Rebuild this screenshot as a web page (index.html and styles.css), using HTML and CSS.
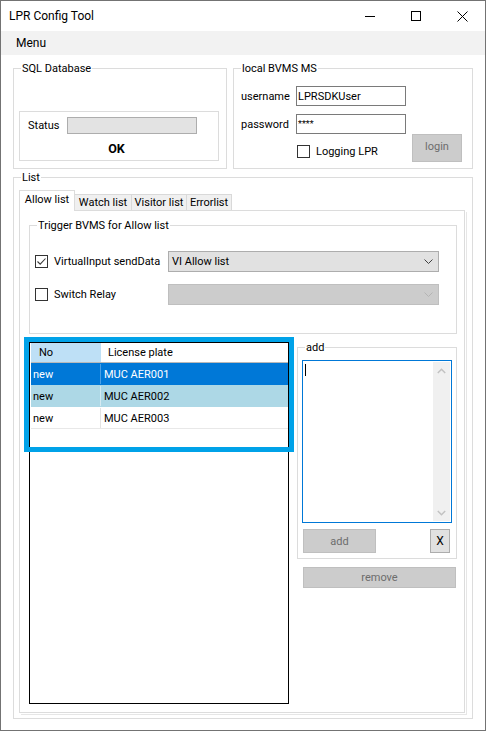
FILE: index.html
```html
<!DOCTYPE html>
<html lang="en">
<head>
    <meta charset="UTF-8">
    <meta name="viewport" content="width=device-width, initial-scale=1.0">
    <title>LPR Config Tool</title>
    <link rel="stylesheet" href="styles.css">
</head>
<body>
    <div class="window">
        <div class="titlebar">
            <span class="title">LPR Config Tool</span>
            <span class="caption-btn">
                <svg width="10" height="1" viewBox="0 0 10 1"><rect width="10" height="1" fill="#000"/></svg>
            </span>
            <span class="caption-btn">
                <svg width="10" height="10" viewBox="0 0 10 10"><rect x="0.5" y="0.5" width="9" height="9" fill="none" stroke="#000"/></svg>
            </span>
            <span class="caption-btn">
                <svg width="11" height="11" viewBox="0 0 11 11"><path d="M0.5 0.5L10.5 10.5M10.5 0.5L0.5 10.5" stroke="#000" stroke-width="1"/></svg>
            </span>
        </div>

        <div class="menubar"><span class="menu-item">Menu</span></div>

        <div class="content">
            <div class="top-row">
                <!-- SQL group -->
                <div class="group sql">
                    <span class="group-title">SQL Database</span>
                    <div class="status-box">
                        <div class="status-row">
                            <span class="status-label">Status</span>
                            <span class="status-field"></span>
                        </div>
                        <div class="status-ok">OK</div>
                    </div>
                </div>

                <!-- BVMS login group -->
                <div class="group bvms">
                    <span class="group-title">local BVMS MS</span>
                    <div class="login-form">
                        <span>username</span>
                        <span class="textbox">LPRSDKUser</span>
                        <span>password</span>
                        <span class="textbox password">****</span>
                    </div>
                    <div class="login-options">
                        <span class="check-item"><span class="checkbox"></span>Logging LPR</span>
                        <button class="btn btn-disabled login-btn">login</button>
                    </div>
                </div>
            </div>

            <div class="group list">
                <span class="group-title">List</span>
                <div class="tab-strip">
                    <span class="tab active">Allow list</span>
                    <span class="tab tab-watch">Watch list</span>
                    <span class="tab tab-visitor">Visitor list</span>
                    <span class="tab tab-error">Errorlist</span>
                </div>
                <div class="tab-page">
                    <div class="group trigger">
                        <span class="group-title">Trigger BVMS for Allow list</span>
                        <div class="trigger-row">
                            <span class="check-item trigger-check">
                                <span class="checkbox">
                                    <svg width="11" height="11" viewBox="0 0 11 11"><polyline points="1.5,5.5 4.2,8.2 9.5,2.5" fill="none" stroke="#3a3a3a" stroke-width="1.1"/></svg>
                                </span>VirtualInput sendData
                            </span>
                            <span class="combo">
                                <span>VI Allow list</span>
                                <svg width="9" height="5" viewBox="0 0 9 5"><polyline points="0.5,0.5 4.5,4.5 8.5,0.5" fill="none" stroke="#404040"/></svg>
                            </span>
                        </div>
                        <div class="trigger-row">
                            <span class="check-item trigger-check"><span class="checkbox"></span>Switch Relay</span>
                            <span class="combo combo-disabled">
                                <span></span>
                                <svg width="9" height="5" viewBox="0 0 9 5"><polyline points="0.5,0.5 4.5,4.5 8.5,0.5" fill="none" stroke="#b4b4b4"/></svg>
                            </span>
                        </div>
                    </div>

                    <div class="lower">
                        <div class="listview-wrap">
                            <div class="listview">
                                <div class="lv-header">
                                    <span class="col-no hot">No</span>
                                    <span class="col-plate">License plate</span>
                                </div>
                                <div class="lv-row selected">
                                    <span class="col-no">new</span>
                                    <span class="col-plate">MUC AER001</span>
                                </div>
                                <div class="lv-row marked">
                                    <span class="col-no">new</span>
                                    <span class="col-plate">MUC AER002</span>
                                </div>
                                <div class="lv-row">
                                    <span class="col-no">new</span>
                                    <span class="col-plate">MUC AER003</span>
                                </div>
                            </div>
                            <div class="highlight"></div>
                        </div>

                        <div class="side">
                            <div class="group add">
                                <span class="group-title">add</span>
                                <div class="memo">
                                    <div class="memo-text"><span class="caret"></span></div>
                                    <div class="scrollbar">
                                        <span class="scroll-arrow">
                                            <svg width="9" height="6" viewBox="0 0 9 6"><polyline points="0.8,5 4.5,1.3 8.2,5" fill="none" stroke="#c2c2c2" stroke-width="1.5"/></svg>
                                        </span>
                                        <span class="scroll-arrow">
                                            <svg width="9" height="6" viewBox="0 0 9 6"><polyline points="0.8,1 4.5,4.7 8.2,1" fill="none" stroke="#c2c2c2" stroke-width="1.5"/></svg>
                                        </span>
                                    </div>
                                </div>
                                <div class="add-buttons">
                                    <button class="btn btn-disabled add-btn">add</button>
                                    <button class="btn clear-btn">X</button>
                                </div>
                            </div>
                            <button class="btn btn-disabled remove-btn">remove</button>
                        </div>
                    </div>
                </div>
            </div>
        </div>
    </div>
</body>
</html>
```

FILE: styles.css
```css
* {
    margin: 0;
    padding: 0;
    box-sizing: border-box;
}

body {
    font-family: Roboto, "Liberation Sans", sans-serif;
    font-size: 11px;
    line-height: 15px;
    color: #000;
    background: #fff;
}

.window {
    width: 486px;
    height: 731px;
    border: 1px solid #737373;
    display: flex;
    flex-direction: column;
    background: #fff;
}

/* Title bar */
.titlebar {
    height: 30px;
    display: flex;
    align-items: center;
    flex-shrink: 0;
}

.title {
    flex: 1;
    font-size: 12px;
    padding-left: 8px;
}

.caption-btn {
    width: 46px;
    height: 30px;
    display: flex;
    align-items: center;
    justify-content: center;
}

.menubar {
    height: 24px;
    background: #f2f2f2;
    display: flex;
    align-items: center;
    flex-shrink: 0;
}

.menu-item {
    font-size: 12px;
    padding-left: 15px;
}

.content {
    padding: 13px 12px 0 12px;
}

/* Group boxes */
.group {
    border: 1px solid #dcdcdc;
}

.group-title {
    display: block;
    width: fit-content;
    height: 15px;
    margin: -8px 0 0 7px;
    padding: 0 1px;
    background: #fff;
}

.top-row {
    display: flex;
    gap: 6px;
    height: 101px;
}

.sql {
    width: 214px;
}

.bvms {
    width: 240px;
}

.status-box {
    height: 50px;
    margin: 35px 7px 0 5px;
    border: 1px solid #dcdcdc;
}

.status-row {
    display: flex;
    align-items: center;
    padding: 5px 0 0 8px;
}

.status-label {
    width: 39px;
}

.status-field {
    width: 130px;
    height: 17px;
    background: #e3e3e3;
    border: 1px solid #adadad;
}

.status-ok {
    margin-top: 7px;
    padding-right: 5px;
    text-align: center;
    font-size: 12.5px;
    font-weight: bold;
}

.login-form {
    display: grid;
    grid-template-columns: 55px 110px;
    row-gap: 8px;
    align-items: center;
    margin: 10px 0 0 7px;
}

.textbox {
    height: 20px;
    border: 1px solid #7a7a7a;
    padding: 0 1px;
    display: flex;
    align-items: center;
}

.textbox.password {
    align-items: flex-start;
    padding-top: 2px;
    font-size: 9px;
}

.login-options {
    display: flex;
    align-items: flex-start;
    padding: 0 10px 0 63px;
}

.login-options .check-item {
    margin-top: 11px;
}

.check-item {
    display: flex;
    align-items: center;
    gap: 6px;
    height: 13px;
}

.checkbox {
    width: 13px;
    height: 13px;
    border: 1px solid #333;
    background: #fff;
    display: flex;
    flex-shrink: 0;
}

/* Buttons */
.btn {
    font-family: inherit;
    font-size: 11px;
    line-height: 15px;
    color: #000;
    background: #e1e1e1;
    border: 1px solid #adadad;
    border-radius: 0;
}

.btn-disabled {
    background: #cccccc;
    border-color: #bfbfbf;
    color: #6d6d6d;
}

.login-btn {
    margin-left: auto;
    width: 50px;
    height: 28px;
    padding-bottom: 3px;
}

/* List group + tabs */
.list {
    margin-top: 8px;
    height: 542px;
    display: flex;
    flex-direction: column;
}

.tab-strip {
    display: flex;
    align-items: flex-end;
    height: 20px;
    margin: 5px 0 0 5px;
}

.tab {
    height: 16px;
    background: #f0f0f0;
    border: 1px solid #d9d9d9;
    border-bottom: none;
    margin-left: -1px;
    text-align: center;
    line-height: 15px;
}

.tab.active {
    position: relative;
    z-index: 1;
    width: 56px;
    height: 21px;
    margin-left: 0;
    margin-bottom: -1px;
    background: #fff;
    border-color: #dcdcdc;
    line-height: 18px;
}

.tab-watch {
    width: 58px;
}

.tab-visitor {
    width: 56px;
}

.tab-error {
    width: 46px;
}

.tab-page {
    flex: 1;
    display: flex;
    flex-direction: column;
    margin: 0 7px 5px 5px;
    border: 1px solid #dcdcdc;
    box-shadow: 1px 1px 0 #fff, 2px 2px 0 #e6e6e6;
}

.trigger {
    height: 109px;
    margin: 14px 7px 0 9px;
}

.trigger-row {
    display: flex;
    align-items: center;
    height: 21px;
    padding-left: 5px;
}

.trigger .group-title + .trigger-row {
    margin-top: 18px;
}

.trigger-row + .trigger-row {
    margin-top: 12px;
}

.trigger-check {
    width: 133px;
}

.combo {
    width: 271px;
    height: 21px;
    display: flex;
    align-items: center;
    justify-content: space-between;
    padding: 0 5px 0 3px;
    background: #e1e1e1;
    border: 1px solid #adadad;
}

.combo-disabled {
    background: #cccccc;
    border-color: #bfbfbf;
}

/* Lower part: list view and add panel */
.lower {
    flex: 1;
    display: flex;
    margin: 8px 0 8px 9px;
}

.listview-wrap {
    position: relative;
    width: 260px;
}

.listview {
    height: 100%;
    border: 1px solid #000;
    padding-left: 1px;
    background: #fff;
}

.lv-header {
    display: flex;
    height: 20px;
    border-bottom: 1px solid #b9b9b9;
}

.lv-header .col-no {
    padding-left: 8px;
    border-right: none;
}

.lv-header .col-plate {
    padding-left: 7px;
}

.lv-header .hot {
    background: #bee0f6;
}

.col-no {
    width: 70px;
    display: flex;
    align-items: center;
    padding-left: 2px;
    border-right: 1px solid #e3e3e3;
}

.col-plate {
    flex: 1;
    display: flex;
    align-items: center;
    padding-left: 3px;
}

.lv-row {
    display: flex;
    height: 22px;
    padding-top: 1px;
    border-bottom: 1px solid #e8e8e8;
}

.lv-row.selected {
    background: #0078d7;
    color: #fff;
    border-bottom-color: #0078d7;
}

.lv-row.selected .col-no {
    border-right-color: #4aa0e6;
}

.lv-row.marked {
    background: #add8e6;
    border-bottom-color: #add8e6;
}

.lv-row.marked .col-no {
    border-right-color: #d5eaf1;
}

/* screenshot markup frame over the list */
.highlight {
    position: absolute;
    left: -5px;
    top: -5px;
    width: 270px;
    height: 115px;
    border: 5px solid #00a2e8;
    pointer-events: none;
}

.side {
    width: 160px;
    margin: 5px 0 0 8px;
}

.add {
    height: 212px;
}

.memo {
    width: 150px;
    height: 163px;
    margin: 5px 0 0 4px;
    padding: 1px;
    border: 1px solid #0078d7;
    display: flex;
}

.memo-text {
    flex: 1;
}

.caret {
    display: block;
    width: 1px;
    height: 12px;
    margin: 2px 0 0 1px;
    background: #000;
}

.scrollbar {
    width: 17px;
    background: #f0f0f0;
    display: flex;
    flex-direction: column;
    justify-content: space-between;
}

.scroll-arrow {
    height: 17px;
    display: flex;
    align-items: center;
    justify-content: center;
}

.add-buttons {
    display: flex;
    justify-content: space-between;
    margin: 6px 6px 0 5px;
}

.add-btn {
    width: 73px;
    height: 24px;
}

.clear-btn {
    width: 20px;
    height: 24px;
    font-size: 12px;
}

.remove-btn {
    width: 153px;
    height: 21px;
    margin: 8px 0 0 6px;
}
```
